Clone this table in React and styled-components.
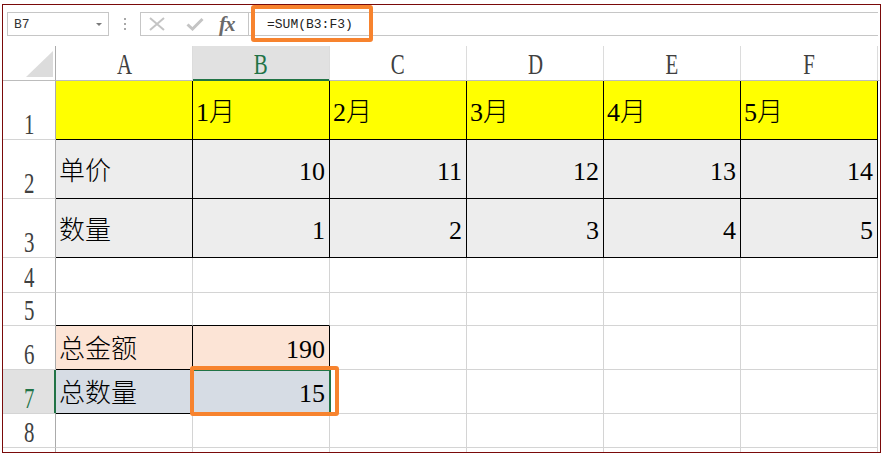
import React from "react";
import styled, { createGlobalStyle } from "styled-components";

const Global = createGlobalStyle`
  html, body { margin: 0; padding: 0; background: #fff; }
  body { width: 884px; height: 454px; overflow: hidden; }
`;

const GREEN = "#217346";
const ORANGE = "#F7832E";
const GRID = "#d4d4d4";

const Frame = styled.div`
  position: relative;
  margin: 4px 0 0 2px;
  width: 877px;
  height: 447px;
  border: 1px solid #7a0a0a;
  background: #fff;
`;

const FormulaBar = styled.div`
  display: flex;
  align-items: stretch;
  height: 24px;
  padding: 7px 2px 0 4px;
  margin-bottom: 10px;
`;

const NameBox = styled.div`
  box-sizing: border-box;
  width: 102px;
  border: 1px solid #c6c6c6;
  display: flex;
  align-items: center;
  justify-content: space-between;
  padding: 0 6px 0 6px;
  font-family: "Liberation Mono", monospace;
  font-size: 13px;
  color: #333;
`;

const Caret = styled.span`
  width: 0;
  height: 0;
  border-left: 3px solid transparent;
  border-right: 3px solid transparent;
  border-top: 3px solid #7a7a7a;
  margin-top: 1px;
`;

const Dots = styled.div`
  width: 31px;
  display: flex;
  flex-direction: column;
  align-items: center;
  justify-content: center;
  gap: 3px;
`;

const Dot = styled.span`
  width: 2px;
  height: 2px;
  background: #a8a8a8;
`;

const IconBox = styled.div`
  box-sizing: border-box;
  width: 109px;
  border: 1px solid #c6c6c6;
  display: flex;
  align-items: center;
  padding-left: 7px;
`;

const Fx = styled.span`
  font-family: "Liberation Serif", serif;
  font-style: italic;
  font-weight: bold;
  font-size: 21px;
  color: #6a6a6a;
  margin-left: 15px;
  letter-spacing: -1px;
  line-height: 1;
`;

const FormulaInput = styled.div`
  position: relative;
  flex: 1;
  box-sizing: border-box;
  border-top: 1px solid #c6c6c6;
  border-bottom: 1px solid #c6c6c6;
  display: flex;
  align-items: center;
  padding-left: 18px;
  font-family: "Liberation Mono", monospace;
  font-size: 13px;
  color: #222;
`;

const Highlight = styled.div`
  position: absolute;
  box-sizing: border-box;
  border: 4px solid ${ORANGE};
  border-radius: 3px;
  pointer-events: none;
  z-index: 5;
`;

const Sheet = styled.div`
  display: grid;
  grid-template-columns: 53px repeat(6, 137px) 1fr;
  grid-template-rows: 35px 59px 59px 59px 35px 33px 44px 44px 34px 20px;
  height: 406px;
  overflow: hidden;
`;

const Corner = styled.div`
  box-sizing: border-box;
  border-right: 1px solid #ababab;
  border-bottom: 1px solid #bcbcbc;
  display: flex;
  align-items: flex-end;
  justify-content: flex-end;
  padding: 0 2px 3px 0;
`;

const Triangle = styled.span`
  width: 0;
  height: 0;
  border-left: 27px solid transparent;
  border-bottom: 26px solid #dcdcdc;
`;

const HeaderText = styled.span`
  display: inline-block;
  font-family: "Liberation Serif", serif;
  font-size: 29px;
  line-height: 1;
  transform: scaleX(0.72);
`;

const ColHeader = styled.div`
  box-sizing: border-box;
  border-right: 1px solid ${(p) => (p.$last ? "transparent" : "#dcdcdc")};
  border-bottom: 1px solid ${(p) => (p.$selected ? GREEN : "#bcbcbc")};
  box-shadow: ${(p) => (p.$selected ? `inset 0 -1px 0 ${GREEN}` : "none")};
  background: ${(p) => (p.$selected ? "#e1e1e1" : "#fff")};
  color: ${(p) => (p.$selected ? GREEN : "#404040")};
  display: flex;
  align-items: flex-end;
  justify-content: center;
  padding-bottom: 1px;
`;

const RowHeader = styled.div`
  box-sizing: border-box;
  border-right: 1px solid ${(p) => (p.$selected ? GREEN : "#ababab")};
  box-shadow: ${(p) => (p.$selected ? `inset -1px 0 0 ${GREEN}` : "none")};
  border-bottom: 1px solid ${GRID};
  background: ${(p) => (p.$selected ? "#e1e1e1" : "#fff")};
  color: ${(p) => (p.$selected ? GREEN : "#404040")};
  display: flex;
  align-items: flex-end;
  justify-content: center;
  overflow: hidden;
`;

const Cell = styled.div`
  position: relative;
  box-sizing: border-box;
  border-right: 1px solid ${(p) => p.$br || GRID};
  border-bottom: 1px solid ${(p) => p.$bb || GRID};
  background: ${(p) => p.$bg || "#fff"};
  display: flex;
  align-items: center;
  justify-content: ${(p) => (p.$right ? "flex-end" : "flex-start")};
  padding: 5px 4px 0 3px;
  font-family: "Liberation Serif", "Noto Sans CJK SC", serif;
  font-weight: 300;
  font-size: 26px;
  line-height: 1;
  color: #000;
  white-space: nowrap;
`;

const Filler = styled.div``;

const Selection = styled.div`
  position: absolute;
  top: -1px;
  left: -2px;
  right: -2px;
  bottom: -1px;
  border: 2px solid ${GREEN};
  pointer-events: none;
  z-index: 3;
`;

const YELLOW = "#ffff00";
const GRAY = "#ededed";
const PEACH = "#fce4d6";
const BLUE = "#d6dce4";
const BLACK = "#000";

const COLS = ["A", "B", "C", "D", "E", "F"];

const rows = [
  { n: 1, bg: YELLOW, black: true, cells: ["", "1月", "2月", "3月", "4月", "5月"] },
  { n: 2, bg: GRAY, black: true, right: true, cells: ["单价", "10", "11", "12", "13", "14"] },
  { n: 3, bg: GRAY, black: true, right: true, cells: ["数量", "1", "2", "3", "4", "5"] },
  { n: 4, cells: [] },
  { n: 5, cells: [], blackBottomAB: true },
  { n: 6, bg: PEACH, blackAB: true, right: true, cells: ["总金额", "190"] },
  { n: 7, bg: BLUE, blackAB: true, right: true, cells: ["总数量", "15"], selected: true },
  { n: 8, cells: [] },
  { n: 9, cells: [], hideLabel: true },
];

function XIcon() {
  return (
    <svg width="18" height="14" viewBox="0 0 18 14">
      <path d="M2 1 L16 13 M16 1 L2 13" stroke="#c4c4c4" strokeWidth="2" fill="none" />
    </svg>
  );
}

function CheckIcon() {
  return (
    <svg width="18" height="14" viewBox="0 0 18 14" style={{ marginLeft: 20 }}>
      <path d="M1.5 7.5 L6.5 12 L16.5 2" stroke="#c4c4c4" strokeWidth="3" fill="none" />
    </svg>
  );
}

export default function App() {
  return (
    <>
      <Global />
      <Frame>
        <FormulaBar>
          <NameBox>
            <span>B7</span>
            <Caret />
          </NameBox>
          <Dots>
            <Dot />
            <Dot />
            <Dot />
          </Dots>
          <IconBox>
            <XIcon />
            <CheckIcon />
            <Fx>fx</Fx>
          </IconBox>
          <FormulaInput>
            =SUM(B3:F3)
            <Highlight style={{ left: 2, top: -8, width: 122, height: 37 }} />
          </FormulaInput>
        </FormulaBar>
        <Sheet>
          <Corner>
            <Triangle />
          </Corner>
          {COLS.map((c) => (
            <ColHeader key={c} $selected={c === "B"}>
              <HeaderText>{c}</HeaderText>
            </ColHeader>
          ))}
          <ColHeader $last />
          {rows.map((r) => (
            <React.Fragment key={r.n}>
              <RowHeader $selected={r.selected}>
                {!r.hideLabel && <HeaderText>{r.n}</HeaderText>}
              </RowHeader>
              {COLS.map((c, i) => {
                const text = r.cells[i] || "";
                const inTable = r.black || (r.blackAB && i < 2);
                const bg = inTable ? r.bg : undefined;
                const br = inTable ? BLACK : undefined;
                const bb = inTable || (r.blackBottomAB && i < 2) ? BLACK : undefined;
                const right = r.right && i > 0;
                const isSel = r.selected && c === "B";
                return (
                  <Cell key={c} $bg={bg} $br={br} $bb={bb} $right={right}>
                    {text}
                    {isSel && (
                      <>
                        <Selection />
                        <Highlight style={{ left: -3, top: -4, width: 149, height: 50 }} />
                      </>
                    )}
                  </Cell>
                );
              })}
              <Filler />
            </React.Fragment>
          ))}
        </Sheet>
      </Frame>
    </>
  );
}
